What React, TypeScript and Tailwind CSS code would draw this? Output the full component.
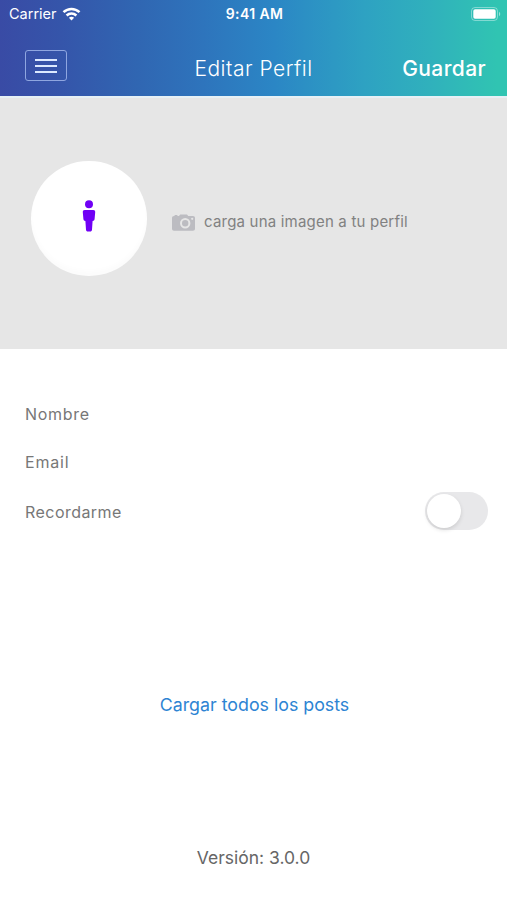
"use client";

import React, { useState } from 'react';

// ==========================================
// Iconos
// ==========================================
const WifiIcon = () => (
    <svg width="19" height="14" viewBox="0 0 18 14" fill="none" stroke="white" strokeWidth="2.5">
        <path d="M1 5.2C5.6 .8 12.4 .8 17 5.2" />
        <path d="M4.1 8.5C6.9 5.8 11.1 5.8 13.9 8.5" />
        <path d="M9 13.4 6.4 10.8C7.9 9.5 10.1 9.5 11.6 10.8Z" fill="white" stroke="none" />
    </svg>
);

const BatteryIcon = () => (
    <svg width="30" height="14" viewBox="0 0 30 14" fill="none">
        <rect x=".5" y=".5" width="26" height="13" rx="3.5" stroke="white" strokeOpacity=".4" />
        <rect x="2.3" y="2.3" width="22.4" height="9.4" rx="1.8" fill="white" />
        <path d="M28 4.8C29.7 5.7 29.7 8.3 28 9.2Z" fill="white" fillOpacity=".5" />
    </svg>
);

const PersonIcon = () => (
    <svg width="14" height="32" viewBox="0 0 14 32" fill="#7000f5">
        <circle cx="7" cy="4.2" r="4" />
        <path d="M2.8 10h8.4C12.6 10 13.3 10.9 13.2 12.2L12.6 19C12.5 20.2 11.8 21 10.6 21L10 29.8C9.9 31 9.2 31.6 8.2 31.6H5.8C4.8 31.6 4.1 31 4 29.8L3.4 21C2.2 21 1.5 20.2 1.4 19L.8 12.2C.7 10.9 1.4 10 2.8 10Z" />
    </svg>
);

const CameraIcon = () => (
    <svg width="23" height="17" viewBox="0 0 23 17">
        <path d="M2 2H2.6V1H5.4V2H7L8.2.6H15L16.2 2H21C22.2 2 23 2.8 23 4V14.8C23 16 22.2 16.8 21 16.8H2C.8 16.8 0 16 0 14.8V4C0 2.8.8 2 2 2Z" fill="#bcbcc1" />
        <circle cx="13.2" cy="9.2" r="4.2" fill="#bcbcc1" stroke="#e6e6e6" strokeWidth="2" />
        <circle cx="20.2" cy="4.8" r="1.1" fill="#e6e6e6" />
    </svg>
);

// ==========================================
// Interruptor
// ==========================================
interface ToggleProps {
    checked: boolean;
    label: string;
    onChange: (value: boolean) => void;
}

const Toggle = ({ checked, label, onChange }: ToggleProps) => (
    <button
        role="switch"
        aria-checked={checked}
        aria-label={label}
        onClick={() => onChange(!checked)}
        className={`flex h-[38px] w-[63px] items-center rounded-full px-[2px] ${
            checked ? 'justify-end bg-[#34c759]' : 'justify-start bg-[#e8e8ea]'
        }`}
    >
        <span className="h-[34px] w-[34px] rounded-full bg-white shadow-[0_2px_4px_rgba(0,0,0,0.12)]" />
    </button>
);

export default function App() {
    const [remember, setRemember] = useState<boolean>(false);

    return (
        <div className="flex h-[900px] w-[507px] flex-col overflow-hidden bg-white font-[Inter,sans-serif]">
            {/* Cabecera */}
            <header className="h-[98px] shrink-0 border-b-2 border-[#e6f0f5] bg-[linear-gradient(90deg,#394ba5_0%,#3555aa_12%,#3066b2_27%,#2e74bc_40%,#2b86c5_54%,#2ea2c2_72%,#30b1bc_85%,#30c4b2_98%)] text-white">
                <div className="grid h-7 grid-cols-3 items-center pl-[9px] pr-[6px]">
                    <div className="flex items-center gap-[5px]">
                        <span className="text-[14.5px]">Carrier</span>
                        <WifiIcon />
                    </div>
                    <span className="pr-[1px] text-center text-[14px] font-semibold leading-5 tracking-[0.4px]">9:41 AM</span>
                    <div className="flex justify-end">
                        <BatteryIcon />
                    </div>
                </div>
                <div className="grid h-[67px] grid-cols-[1fr_auto_1fr] items-center pb-[1px] pl-[25px] pr-[21px] pt-[14px]">
                    <button aria-label="Menú" className="-mt-[5px] flex h-[31px] w-[42px] flex-col items-center justify-center gap-[4px] rounded-[3px] border border-[#8fa6e0]">
                        <span className="h-[2px] w-[22px] bg-[#dce9ff]" />
                        <span className="h-[2px] w-[22px] bg-[#dce9ff]" />
                        <span className="h-[2px] w-[22px] bg-[#dce9ff]" />
                    </button>
                    <h1 className="-ml-[4px] pt-[1px] text-[21px] font-light tracking-[0.5px]">Editar Perfil</h1>
                    <button className="justify-self-end pt-[2px] text-[21px] font-medium tracking-[0.4px]">Guardar</button>
                </div>
            </header>

            {/* Imagen de perfil */}
            <section className="flex h-[251px] shrink-0 items-start bg-[#e6e6e6] pl-[31px] pt-[63px]">
                <div className="flex h-[115px] w-[116px] items-center justify-center rounded-full bg-white pb-[6px] shadow-[inset_0_-5px_5px_rgba(0,0,0,0.015)]">
                    <PersonIcon />
                </div>
                <div className="ml-[25px] mt-[49px] flex h-6 items-center gap-[9px]">
                    <CameraIcon />
                    <span className="whitespace-nowrap text-[15px] tracking-[0.2px] text-[#818181]">carga una imagen a tu perfil</span>
                </div>
            </section>

            {/* Formulario */}
            <section className="flex flex-col pl-[25px] pr-[19px] pt-[53px] text-[16px] text-[#777777]">
                <div className="flex h-6 items-center tracking-[0.7px]">Nombre</div>
                <div className="mt-6 flex h-6 items-center tracking-[0.8px]">Email</div>
                <div className="mt-[18px] flex h-[38px] items-center justify-between">
                    <span className="pt-[2px] tracking-[0.45px]">Recordarme</span>
                    <Toggle checked={remember} label="Recordarme" onChange={setRemember} />
                </div>
            </section>

            <div className="mt-[160px] flex justify-center pl-[2px]">
                <button className="h-7 pt-[2px] text-[17.8px] text-[#2d84d3]">Cargar todos los posts</button>
            </div>
            <p className="mt-[126px] h-7 text-center text-[17.5px] leading-7 text-[#666666]">Versión: 3.0.0</p>
        </div>
    );
}
